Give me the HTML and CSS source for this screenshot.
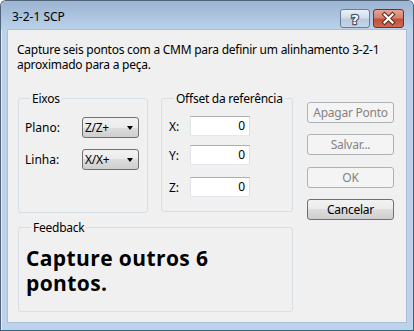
FILE: index.html
```html
<!DOCTYPE html>
<html lang="pt">
<head>
<meta charset="utf-8">
<title>3-2-1 SCP</title>
<link rel="stylesheet" href="styles.css">
</head>
<body>
<div class="window">
  <div class="titlebar">
    <span class="title">3-2-1 SCP</span>
    <div class="caption-buttons">
      <div class="cap help">
        <svg width="30" height="17" viewBox="0 0 30 17">
          <text x="15" y="13.5" text-anchor="middle" class="qmark-outline">?</text>
          <text x="15" y="13.5" text-anchor="middle" class="qmark">?</text>
        </svg>
      </div>
      <div class="cap close">
        <svg width="31" height="17" viewBox="0 0 31 17">
          <path d="M11.5 4.5 L19.5 12.5 M19.5 4.5 L11.5 12.5" stroke="#5a2a24" stroke-width="4.2" stroke-linecap="square" fill="none"/>
          <path d="M11.5 4.5 L19.5 12.5 M19.5 4.5 L11.5 12.5" stroke="#ffffff" stroke-width="2.2" stroke-linecap="square" fill="none"/>
        </svg>
      </div>
    </div>
  </div>
  <div class="client">
    <p class="desc">Capture seis pontos com a CMM para definir um alinhamento 3-2-1 aproximado para a peça.</p>
    <div class="main">
      <div class="left">
        <div class="groups">
          <fieldset class="group eixos">
            <legend>Eixos</legend>
            <div class="row">
              <span class="lbl">Plano:</span>
              <div class="combo"><span>Z/Z+</span><i class="arrow"></i></div>
            </div>
            <div class="row">
              <span class="lbl">Linha:</span>
              <div class="combo"><span>X/X+</span><i class="arrow"></i></div>
            </div>
          </fieldset>
          <fieldset class="group offset">
            <legend>Offset da referência</legend>
            <div class="row r1">
              <span class="lbl">X:</span>
              <div class="edit">0</div>
            </div>
            <div class="row r2">
              <span class="lbl">Y:</span>
              <div class="edit">0</div>
            </div>
            <div class="row r3">
              <span class="lbl">Z:</span>
              <div class="edit">0</div>
            </div>
          </fieldset>
        </div>
        <fieldset class="group feedback">
          <legend>Feedback</legend>
          <p class="big">Capture outros 6 pontos.</p>
        </fieldset>
      </div>
      <div class="buttons">
        <div class="btn disabled">Apagar Ponto</div>
        <div class="btn disabled">Salvar...</div>
        <div class="btn disabled ok">OK</div>
        <div class="btn cancel">Cancelar</div>
      </div>
    </div>
  </div>
</div>
</body>
</html>
```
FILE: styles.css
```css
* { box-sizing: border-box; }
html, body { margin: 0; padding: 0; background: #ffffff; }
body {
  font-family: "Noto Sans", "Open Sans", sans-serif;
  font-size: 12px;
  color: #000;
}

.window {
  width: 414px;
  height: 331px;
  border: 1px solid #50647a;
  border-right-color: #2f6a7a;
  border-bottom-color: #2f6a7a;
  border-radius: 6px 6px 0 0;
  background: #bcd3eb;
  display: flex;
  flex-direction: column;
  padding: 0 7px 8px 7px;
  box-shadow: inset 1px 1px 0 rgba(255,255,255,0.6);
}

.titlebar {
  height: 29px;
  margin: 0 -7px;
  padding: 0 9px 0 11px;
  background: linear-gradient(to bottom, #9bb4d1 0%, #abc3de 50%, #bcd3eb 100%);
  border-radius: 5px 5px 0 0;
  display: flex;
  align-items: flex-start;
  justify-content: space-between;
  flex: none;
}
.title {
  margin-top: 8px;
  font-size: 12px;
  line-height: 15px;
  color: #000;
}
.caption-buttons {
  display: flex;
  gap: 3px;
  margin-top: 9px;
}
.cap {
  height: 17px;
  border-radius: 3px;
  display: flex;
}
.help {
  width: 30px;
  border: 1px solid #6a7c92;
  background: linear-gradient(to bottom, #e9f0f8 0%, #d2deec 45%, #b9cbe0 55%, #c6d6e8 100%);
  margin: -1px 0;
  height: 19px;
}
.help svg { margin: 0 -1px; }
.qmark-outline {
  font-family: "DejaVu Sans", sans-serif;
  font-weight: bold;
  font-size: 13px;
  fill: #46556a;
  stroke: #46556a;
  stroke-width: 2.4px;
}
.qmark {
  font-family: "DejaVu Sans", sans-serif;
  font-weight: bold;
  font-size: 13px;
  fill: #ffffff;
}
.close {
  width: 31px;
  border: 1px solid #6b332b;
  background: linear-gradient(to bottom, #e6a597 0%, #d5826e 45%, #c2503b 55%, #cd6a52 100%);
  margin: -1px 0;
  height: 19px;
}
.close svg { margin: 0 -1px; }

.client {
  flex: 1;
  background: #f0f0f0;
  box-shadow: 0 0 0 1px #a9bfd8;
  padding: 0 0 0 10px;
}

.desc {
  margin: 12px 0 0 -1px;
  width: 390px;
  line-height: 15px;
  letter-spacing: -0.25px;
}

.main {
  display: flex;
  gap: 14px;
  margin-top: 19px;
}
.left {
  width: 275px;
  display: flex;
  flex-direction: column;
  gap: 7px;
}
.groups {
  display: flex;
  gap: 13px;
}

.group {
  margin: 0;
  padding: 0;
  border: 1px solid #d5dfe5;
  border-radius: 3px;
  min-width: 0;
}
.group legend {
  padding: 0 2px;
  margin-left: 5px;
  line-height: 15px;
  font-size: 12px;
  letter-spacing: -0.25px;
}

.eixos {
  width: 130px;
  height: 122px;
  padding: 11px 0 0 6px;
  display: flex;
  flex-direction: column;
  gap: 11px;
}
.offset {
  width: 132px;
  height: 121px;
  padding: 10px 0 0 7px;
}

.row {
  display: flex;
  align-items: center;
}
.eixos .lbl { width: 57px; }
.offset .lbl { width: 21px; }
.offset .r2 { margin-top: 9px; }
.offset .r3 { margin-top: 12px; }

.combo {
  width: 57px;
  height: 21px;
  border: 1px solid #707070;
  border-radius: 3px;
  background: linear-gradient(to bottom, #f2f2f2 0%, #ebebeb 50%, #dddddd 50%, #cfcfcf 100%);
  display: flex;
  align-items: center;
  justify-content: space-between;
  padding: 0 5px 0 2px;
  letter-spacing: -0.3px;
}
.arrow {
  width: 0;
  height: 0;
  border-left: 3.5px solid transparent;
  border-right: 3.5px solid transparent;
  border-top: 4px solid #000;
}

.edit {
  width: 60px;
  height: 20px;
  background: #fff;
  border: 1px solid #e3e9ef;
  border-top-color: #abadb3;
  border-left-color: #e2e3ea;
  border-right-color: #dbdfe6;
  text-align: right;
  padding-right: 4px;
  line-height: 18px;
}

.feedback {
  width: 275px;
  height: 92px;
  padding: 11px 0 0 7px;
}
.big {
  margin: 0;
  font-family: "Open Sans", "Noto Sans", sans-serif;
  font-weight: 700;
  font-size: 21px;
  line-height: 25px;
  letter-spacing: 0.4px;
  width: 230px;
}

.buttons {
  width: 87px;
  display: flex;
  flex-direction: column;
  gap: 11px;
  margin-top: 11px;
}
.btn {
  height: 21px;
  border-radius: 3px;
  display: flex;
  align-items: center;
  justify-content: center;
  letter-spacing: -0.25px;
}
.btn.disabled {
  border: 1px solid #adb2b5;
  background: #f4f4f4;
  color: #838383;
}
.btn.ok { margin-top: 1px; }
.btn.cancel {
  border: 1px solid #707070;
  background: linear-gradient(to bottom, #f2f2f2 0%, #ebebeb 50%, #dddddd 50%, #cfcfcf 100%);
  color: #000;
}
```
